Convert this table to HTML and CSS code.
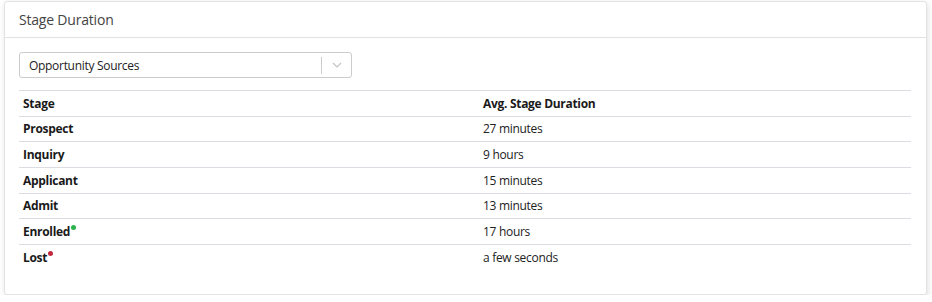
FILE: index.html
```html
<!DOCTYPE html>
<html>
<head>
<meta charset="utf-8">
<link rel="stylesheet" href="styles.css">
</head>
<body>
<div class="card">
  <div class="card-header">Stage Duration</div>
  <div class="card-body">
    <div class="select">
      <span class="select-value">Opportunity Sources</span>
      <span class="select-sep"></span>
      <span class="select-arrow">
        <svg width="10" height="6" viewBox="0 0 10 6"><path d="M1 1 L5 5 L9 1" fill="none" stroke="#c4c4c4" stroke-width="1.2"/></svg>
      </span>
    </div>
    <div class="table">
      <div class="row head"><div class="c1">Stage</div><div class="c2">Avg. Stage Duration</div></div>
      <div class="row"><div class="c1">Prospect</div><div class="c2">27 minutes</div></div>
      <div class="row"><div class="c1">Inquiry</div><div class="c2">9 hours</div></div>
      <div class="row"><div class="c1">Applicant</div><div class="c2">15 minutes</div></div>
      <div class="row"><div class="c1">Admit</div><div class="c2">13 minutes</div></div>
      <div class="row"><div class="c1">Enrolled<span class="dot green"></span></div><div class="c2">17 hours</div></div>
      <div class="row"><div class="c1">Lost<span class="dot red"></span></div><div class="c2">a few seconds</div></div>
    </div>
  </div>
</div>
</body>
</html>
```
FILE: styles.css
```css
html, body { margin: 0; padding: 0; background: #fff; }
body {
  font-family: "Open Sans", "Noto Sans", sans-serif;
  color: #212529;
  padding: 1px 5px 0 4px;
}
.card {
  width: 923px;
  height: 294px;
  box-sizing: border-box;
  border: 1px solid #e3e3e3;
  border-radius: 3px;
  background: #fff;
  box-shadow: 1px 2px 6px rgba(0,0,0,0.13);
}
.card-header {
  height: 36px;
  box-sizing: border-box;
  border-bottom: 1px solid #e2e2e2;
  padding: 8px 14px 0;
  font-size: 14px;
  color: #444;
  letter-spacing: -0.2px;
}
.card-body {
  padding: 14px 14px 0;
}
.select {
  width: 333px;
  height: 26px;
  box-sizing: border-box;
  border: 1px solid #ccc;
  border-radius: 3px;
  display: flex;
  align-items: center;
  font-size: 12px;
  letter-spacing: -0.3px;
}
.select-value { flex: 1; padding-left: 9px; color: #222; }
.select-sep { width: 1px; height: 17px; background: #ccc; }
.select-arrow { width: 29px; display: flex; justify-content: center; align-items: center; }
.table { margin-top: 12px; width: 892px; }
.row {
  display: grid;
  grid-template-columns: 460px 1fr;
  height: 25.67px;
  box-sizing: border-box;
  border-top: 1px solid #dcdde2;
  font-size: 12px;
  letter-spacing: -0.3px;
  align-items: center;
}
.row .c1 { padding-left: 4px; font-weight: 700; color: #1a1a1a; }
.row .c2 { padding-left: 4px; color: #222; }
.row.head .c2 { font-weight: 700; color: #1a1a1a; }
.dot {
  display: inline-block;
  width: 5px; height: 5px;
  border-radius: 50%;
  margin-left: 1px;
  vertical-align: 6px;
}
.dot.green { background: #2bb24c; }
.dot.red { background: #c2283d; }
```
